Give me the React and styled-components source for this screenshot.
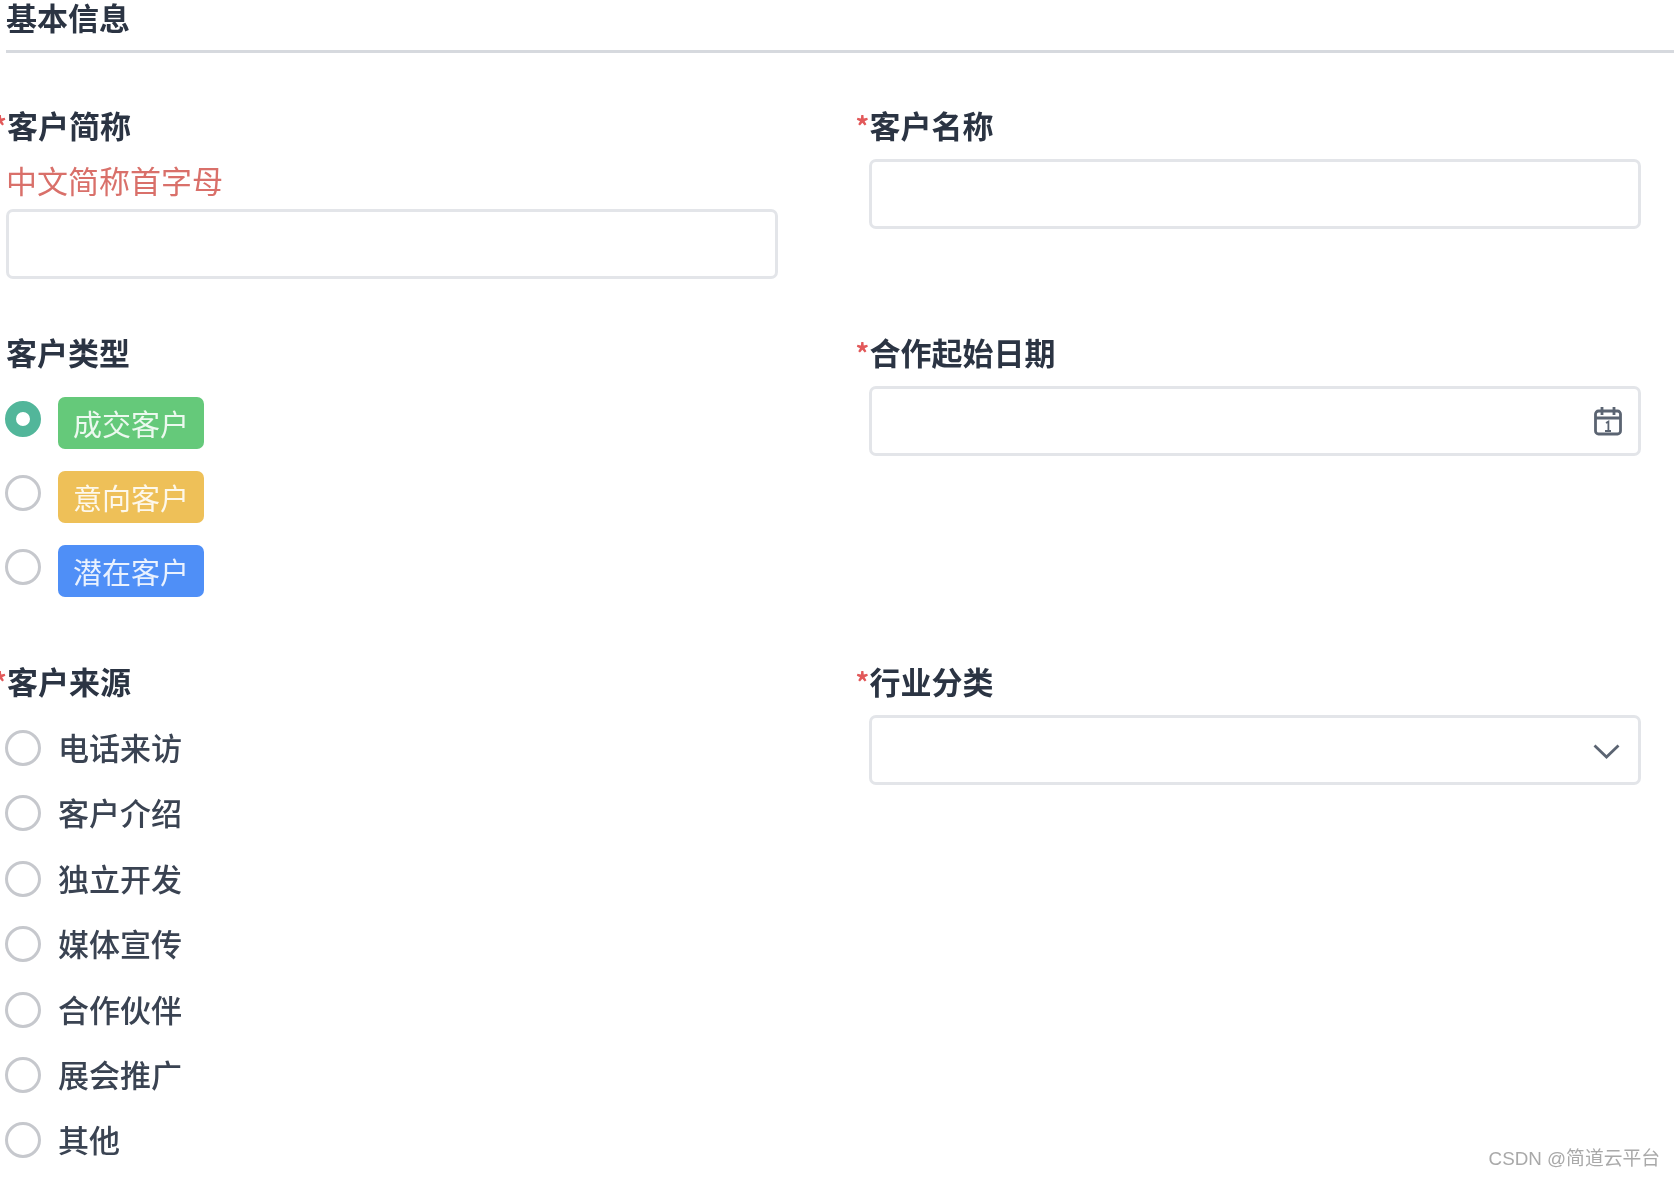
import React from 'react';
import styled, { createGlobalStyle } from 'styled-components';

const GlobalStyle = createGlobalStyle`
    html, body {
        margin: 0;
        padding: 0;
        background: #fff;
    }
    body {
        font-family: 'Noto Sans CJK SC', 'Noto Sans', sans-serif;
        overflow: hidden;
    }
`;

const Page = styled.div`
    position: relative;
    width: 1674px;
    height: 1178px;
    overflow: hidden;
    padding-left: 6px;
    box-sizing: border-box;
    filter: blur(0.7px);
`;

const SectionTitle = styled.h2`
    margin: 0 0 57px;
    height: 50px;
    line-height: 34px;
    font-size: 31px;
    font-weight: 700;
    color: #2b3443;
    border-bottom: 3px solid #d6d9de;
`;

const Grid = styled.div`
    display: grid;
    grid-template-columns: 772px 772px;
    column-gap: 90.5px;
    row-gap: 58px;
    align-items: start;
`;

const Field = styled.div`
    display: flex;
    flex-direction: column;
    margin-top: ${p => p.$top || 0}px;
`;

const Label = styled.label`
    position: relative;
    display: block;
    height: 34px;
    line-height: 30px;
    font-size: 31px;
    font-weight: 700;
    color: #2b3443;
    padding-left: ${p => p.$indent ? 1 : 0}px;

    ${p => p.$required && `
        &::before {
            content: '*';
            position: absolute;
            left: -13px;
            top: 1px;
            font-size: 27px;
            font-weight: 700;
            color: #e2595a;
        }
    `}
`;

const Hint = styled.div`
    margin: 20px 0 11px 0;
    height: 34px;
    line-height: 32px;
    font-size: 31px;
    color: #d9706a;
`;

const InputBox = styled.div`
    display: flex;
    align-items: center;
    justify-content: flex-end;
    box-sizing: border-box;
    height: 70px;
    margin-top: ${p => p.$top || 0}px;
    padding-right: ${p => p.$pad || 0}px;
    background: #fff;
    border: 3px solid #e3e5e9;
    border-radius: 7px;
`;

const TagList = styled.div`
    display: flex;
    flex-direction: column;
    gap: 22px;
    margin-top: 26px;
`;

const TagRow = styled.div`
    display: flex;
    align-items: flex-start;
    gap: 17px;
`;

const Radio = styled.span`
    flex: none;
    box-sizing: border-box;
    width: 36px;
    height: 36px;
    margin-top: ${p => p.$top || 0}px;
    margin-left: -1px;
    border-radius: 50%;
    border: ${p => p.$checked ? '11px solid #52b69a' : '3px solid #c6c8cd'};
    background: #fff;
`;

const Tag = styled.span`
    display: flex;
    align-items: center;
    justify-content: center;
    width: 146px;
    height: 52px;
    border-radius: 7px;
    font-size: 29px;
    color: rgba(255, 255, 255, 0.88);
    background: ${p => p.$color};
`;

const OptionList = styled.div`
    display: flex;
    flex-direction: column;
    gap: 31.4px;
    margin-top: 31px;
`;

const OptionRow = styled.div`
    display: flex;
    align-items: center;
    gap: 17px;
    height: 34px;
    font-size: 31px;
    font-weight: 500;
    color: #3a4352;
`;

const OptionText = styled.span`
    padding-bottom: 3px;
`;

const Watermark = styled.div`
    position: absolute;
    right: 14px;
    bottom: 6px;
    font-family: 'Liberation Sans', 'Noto Sans CJK SC', sans-serif;
    font-size: 18.8px;
    line-height: 26px;
    color: #a9a9a9;
`;

const ChevronWrap = styled.svg`
    margin-top: 3px;
`;

const CalendarIcon = () => (
    <svg width="28" height="30" viewBox="0 0 28 30" fill="none" stroke="#5b6472" strokeWidth="2.8">
        <rect x="1.5" y="5" width="25" height="23" rx="3" />
        <path d="M8 1v8M20 1v8M1.5 12h25" />
        <path d="M12 17l2.4-1.4V25M11 25h6" strokeWidth="1.8" />
    </svg>
);

const ChevronIcon = () => (
    <ChevronWrap width="27" height="15" viewBox="0 0 27 15" fill="none" stroke="#5b6472" strokeWidth="2.8">
        <path d="M1.5 1.5L13.5 13 25.5 1.5" />
    </ChevronWrap>
);

const tags = [
    { text: '成交客户', color: '#65c97a', checked: true },
    { text: '意向客户', color: '#eec058' },
    { text: '潜在客户', color: '#4f8ff7' },
];

const sources = ['电话来访', '客户介绍', '独立开发', '媒体宣传', '合作伙伴', '展会推广', '其他'];

function App() {
    return (
        <Page>
            <GlobalStyle />
            <SectionTitle>基本信息</SectionTitle>
            <Grid>
                <Field>
                    <Label $required $indent>客户简称</Label>
                    <Hint>中文简称首字母</Hint>
                    <InputBox />
                </Field>
                <Field>
                    <Label $required $indent>客户名称</Label>
                    <InputBox $top={15} />
                </Field>

                <Field>
                    <Label>客户类型</Label>
                    <TagList>
                        {tags.map(t => (
                            <TagRow key={t.text}>
                                <Radio $top={4} $checked={t.checked} />
                                <Tag $color={t.color}>{t.text}</Tag>
                            </TagRow>
                        ))}
                    </TagList>
                </Field>
                <Field>
                    <Label $required $indent>合作起始日期</Label>
                    <InputBox $top={15} $pad={16}>
                        <CalendarIcon />
                    </InputBox>
                </Field>

                <Field $top={11}>
                    <Label $required $indent>客户来源</Label>
                    <OptionList>
                        {sources.map(s => (
                            <OptionRow key={s}>
                                <Radio />
                                <OptionText>{s}</OptionText>
                            </OptionRow>
                        ))}
                    </OptionList>
                </Field>
                <Field $top={11}>
                    <Label $required $indent>行业分类</Label>
                    <InputBox $top={15} $pad={18}>
                        <ChevronIcon />
                    </InputBox>
                </Field>
            </Grid>
            <Watermark>CSDN @简道云平台</Watermark>
        </Page>
    );
}

export default App;
